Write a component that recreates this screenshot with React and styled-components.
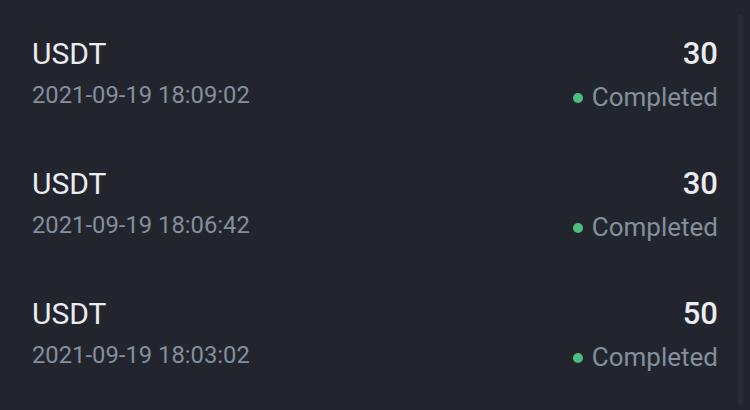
import React from 'react';
import styled, { createGlobalStyle } from 'styled-components';

const GlobalStyle = createGlobalStyle`
    html, body {
        margin: 0;
        padding: 0;
        background: #22252d;
    }
    body {
        font-family: Roboto, "Noto Sans", sans-serif;
        -webkit-font-smoothing: antialiased;
    }
`;

const Screen = styled.div`
    width: 750px;
    height: 410px;
    display: flex;
    background: #22252d;
    overflow: hidden;
`;

const List = styled.div`
    flex: 1;
    display: flex;
    flex-direction: column;
    gap: 54px;
    padding: 36px 20px 0 32px;
`;

const Row = styled.div`
    display: flex;
    justify-content: space-between;
`;

const Column = styled.div`
    display: flex;
    flex-direction: column;
    align-items: ${({ $right }) => ($right ? 'flex-end' : 'flex-start')};
`;

const Asset = styled.div`
    font-size: 30px;
    line-height: 36px;
    color: #eaecef;
`;

const Time = styled.div`
    margin-top: 8px;
    font-size: 23.8px;
    line-height: 30px;
    color: #848e9c;
`;

const Amount = styled.div`
    font-size: 31px;
    line-height: 36px;
    font-weight: 500;
    color: #eaecef;
`;

const Status = styled.div`
    margin-top: 10px;
    display: flex;
    align-items: center;
    gap: 9px;
    font-size: 26px;
    line-height: 30px;
    color: #848e9c;
`;

const Dot = styled.span`
    width: 10px;
    height: 10px;
    border-radius: 50%;
    background: ${({ $color }) => $color};
    margin-top: 1px;
`;

const Track = styled.div`
    width: 5px;
    margin: 14px 7px 5px 0;
    border-radius: 3px;
    background: #292c34;
`;

const records = [
    { asset: 'USDT', time: '2021-09-19 18:09:02', amount: '30', status: 'Completed' },
    { asset: 'USDT', time: '2021-09-19 18:06:42', amount: '30', status: 'Completed' },
    { asset: 'USDT', time: '2021-09-19 18:03:02', amount: '50', status: 'Completed' },
];

const App = () => {
    return (
        <>
            <GlobalStyle />
            <Screen>
                <List>
                    {records.map((r, i) => (
                        <Row key={i}>
                            <Column>
                                <Asset>{r.asset}</Asset>
                                <Time>{r.time}</Time>
                            </Column>
                            <Column $right>
                                <Amount>{r.amount}</Amount>
                                <Status>
                                    <Dot $color="#4cbf80" />
                                    {r.status}
                                </Status>
                            </Column>
                        </Row>
                    ))}
                </List>
                <Track />
            </Screen>
        </>
    );
};

export default App;
